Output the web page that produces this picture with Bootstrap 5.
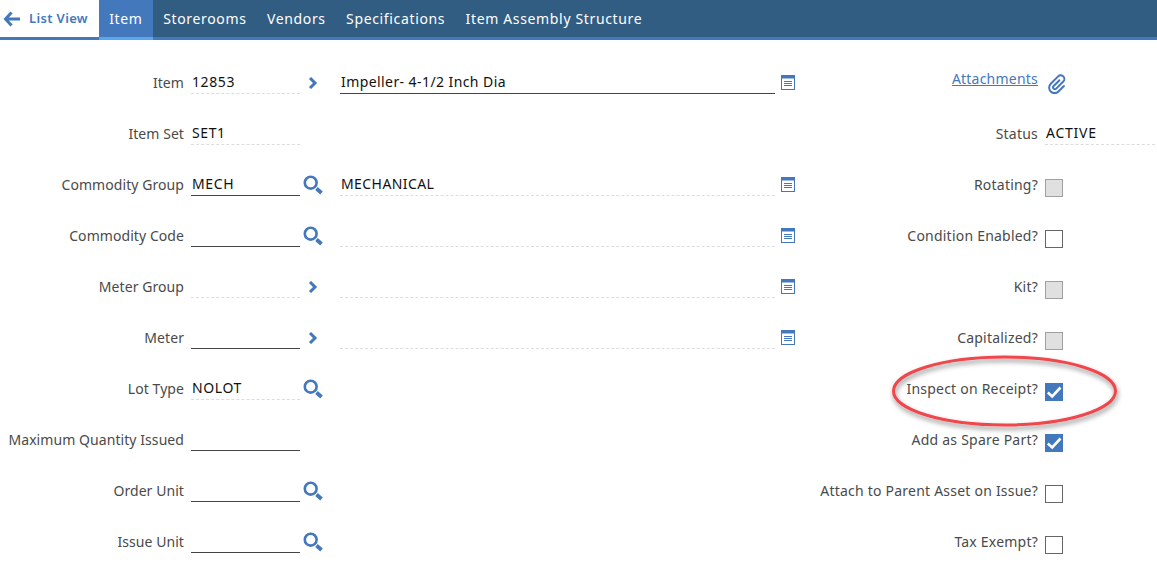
<!DOCTYPE html>
<html lang="en">
<head>
<meta charset="utf-8">
<title>Item</title>
<link rel="stylesheet" href="https://cdn.jsdelivr.net/npm/bootstrap@5.3.0/dist/css/bootstrap.min.css">
<style>
html,body{height:576px;overflow:hidden;background:#fff}
body{font-family:"Noto Sans","Liberation Sans",sans-serif;font-size:14px;color:#4a4a4a}
.tabbar{height:40px;background:#325d82;border-bottom:3px solid #4478bd}
.tab-back{width:99px;height:37px;background:#fff;color:#4478bd;font-weight:600;font-size:13px;letter-spacing:.35px;padding-left:3px;gap:9px;text-decoration:none}
.tab-link{height:37px;padding:0 10.2px;color:#fff;font-size:14px;text-decoration:none;letter-spacing:.65px}
.tab-on{background:#4478bd;width:54px;height:40px;box-shadow:inset 0 -3px 0 #5aa5f0;padding-bottom:3px}
.form-area{padding-top:17px;position:relative}
.frow{height:51px}
.flabel{width:184px;text-align:right;letter-spacing:.07px}
.fval{width:109px;margin-left:7px;height:22px;padding-left:1px;line-height:20px;color:#111;letter-spacing:.6px;border-bottom:1px dashed #ddd}
.fval.edit{border-bottom:1px solid #444}
.ic-slot{width:40px;padding-left:3px;flex:none}
.ic-chev{margin-left:5px}
.fdesc{width:435px;height:22px;line-height:20px;padding-left:1px;color:#111;letter-spacing:.42px;border-bottom:1px dashed #ddd}
.fdesc.edit{border-bottom:1px solid #444}
.ic-doc{margin-left:6px;width:14px}
.rlabel{width:243px;text-align:right;flex:none;letter-spacing:.22px}
.mid{width:455px;flex:none}
.rlabel a{color:#4478bd}
.rlabel.lift{padding-bottom:8px}
.rval{width:110px;margin-left:7px;height:22px;line-height:20px;padding-left:1px;color:#111;letter-spacing:.75px;border-bottom:1px dashed #ddd}
.cbx{width:18px;height:18px;margin:6px 0 0 7px;border:1px solid #666;background:#fff;flex:none}
.cbx.off{background:#e0e0e0;border-color:#a0a0a0}
.cbx.on{background:#4478bd;border-color:#4478bd}
.cbx svg{display:block}
.clip{margin-left:10px;margin-top:2px}
.ring{position:absolute;left:892px;top:356px;width:226px;height:72px;pointer-events:none;overflow:visible}
</style>
</head>
<body>
<svg width="0" height="0" class="position-absolute">
<defs>
<symbol id="i-chev" viewBox="0 0 10 12"><path d="M2 1 7 6 2 11" fill="none" stroke="#4478bd" stroke-width="3"/></symbol>
<symbol id="i-mag" viewBox="0 0 20 20"><circle cx="7.7" cy="7.7" r="5.900" fill="none" stroke="#4478bd" stroke-width="2.600"/><path d="M13.500 13.500 18.500 18" stroke="#4478bd" stroke-width="3.800"/></symbol>
<symbol id="i-doc" viewBox="0 0 14 15"><rect x=".5" y=".5" width="13" height="14" fill="#fff" stroke="#4478bd"/><rect x="0" y="0" width="14" height="3.5" fill="#4478bd"/><path d="M3 6.5h8M3 8.5h8M3 10.5h8" stroke="#4478bd"/></symbol>
<symbol id="i-check" viewBox="0 0 16 16"><path d="M1.800 8.500 6.200 12.500 14.500 3.500" fill="none" stroke="#fff" stroke-width="2.600"/></symbol>
</defs>
</svg>

<nav class="tabbar d-flex align-items-start">
  <a class="tab-back d-flex align-items-center" href="#"><svg width="17" height="16" viewBox="0 0 17 16"><path d="M8.500 1.500 2.500 8l6 6.500M3 8H17" fill="none" stroke="#4478bd" stroke-width="3"/></svg>List View</a>
  <a class="tab-link tab-on d-flex align-items-center" href="#">Item</a>
  <a class="tab-link d-flex align-items-center" href="#">Storerooms</a>
  <a class="tab-link d-flex align-items-center" href="#">Vendors</a>
  <a class="tab-link d-flex align-items-center" href="#">Specifications</a>
  <a class="tab-link d-flex align-items-center" href="#">Item Assembly Structure</a>
</nav>

<main class="form-area">
  <div class="frow d-flex align-items-center">
    <div class="flabel">Item</div><div class="fval">12853</div>
    <div class="ic-slot d-flex"><svg class="ic-chev" width="10" height="12"><use href="#i-chev"/></svg></div>
    <div class="fdesc edit">Impeller- 4-1/2 Inch Dia</div><svg class="ic-doc" width="14" height="15"><use href="#i-doc"/></svg>
    <div class="rlabel lift"><a href="#">Attachments</a></div>
    <svg class="clip" width="20" height="20" viewBox="-11 -11 22 22"><g transform="rotate(45)"><path d="M-1.800 -4V5a2 2 0 0 0 4 0V-6a4 4 0 0 0-8 0V5.500a6 6 0 0 0 12 0V-3" fill="none" stroke="#4478bd" stroke-width="2.200" stroke-linecap="round"/></g></svg>
  </div>
  <div class="frow d-flex align-items-center">
    <div class="flabel">Item Set</div><div class="fval">SET1</div>
    <div class="ic-slot"></div><div class="mid"></div>
    <div class="rlabel">Status</div><div class="rval">ACTIVE</div>
  </div>
  <div class="frow d-flex align-items-center">
    <div class="flabel">Commodity Group</div><div class="fval edit">MECH</div>
    <div class="ic-slot d-flex"><svg width="20" height="20"><use href="#i-mag"/></svg></div>
    <div class="fdesc">MECHANICAL</div><svg class="ic-doc" width="14" height="15"><use href="#i-doc"/></svg>
    <div class="rlabel">Rotating?</div><div class="cbx off"></div>
  </div>
  <div class="frow d-flex align-items-center">
    <div class="flabel">Commodity Code</div><div class="fval edit"></div>
    <div class="ic-slot d-flex"><svg width="20" height="20"><use href="#i-mag"/></svg></div>
    <div class="fdesc"></div><svg class="ic-doc" width="14" height="15"><use href="#i-doc"/></svg>
    <div class="rlabel">Condition Enabled?</div><div class="cbx"></div>
  </div>
  <div class="frow d-flex align-items-center">
    <div class="flabel">Meter Group</div><div class="fval"></div>
    <div class="ic-slot d-flex"><svg class="ic-chev" width="10" height="12"><use href="#i-chev"/></svg></div>
    <div class="fdesc"></div><svg class="ic-doc" width="14" height="15"><use href="#i-doc"/></svg>
    <div class="rlabel">Kit?</div><div class="cbx off"></div>
  </div>
  <div class="frow d-flex align-items-center">
    <div class="flabel">Meter</div><div class="fval edit"></div>
    <div class="ic-slot d-flex"><svg class="ic-chev" width="10" height="12"><use href="#i-chev"/></svg></div>
    <div class="fdesc"></div><svg class="ic-doc" width="14" height="15"><use href="#i-doc"/></svg>
    <div class="rlabel">Capitalized?</div><div class="cbx off"></div>
  </div>
  <div class="frow d-flex align-items-center">
    <div class="flabel">Lot Type</div><div class="fval">NOLOT</div>
    <div class="ic-slot d-flex"><svg width="20" height="20"><use href="#i-mag"/></svg></div>
    <div class="mid"></div>
    <div class="rlabel">Inspect on Receipt?</div><div class="cbx on"><svg width="16" height="16"><use href="#i-check"/></svg></div>
  </div>
  <div class="frow d-flex align-items-center">
    <div class="flabel">Maximum Quantity Issued</div><div class="fval edit"></div>
    <div class="ic-slot"></div><div class="mid"></div>
    <div class="rlabel">Add as Spare Part?</div><div class="cbx on"><svg width="16" height="16"><use href="#i-check"/></svg></div>
  </div>
  <div class="frow d-flex align-items-center">
    <div class="flabel">Order Unit</div><div class="fval edit"></div>
    <div class="ic-slot d-flex"><svg width="20" height="20"><use href="#i-mag"/></svg></div>
    <div class="mid"></div>
    <div class="rlabel">Attach to Parent Asset on Issue?</div><div class="cbx"></div>
  </div>
  <div class="frow d-flex align-items-center">
    <div class="flabel">Issue Unit</div><div class="fval edit"></div>
    <div class="ic-slot d-flex"><svg width="20" height="20"><use href="#i-mag"/></svg></div>
    <div class="mid"></div>
    <div class="rlabel">Tax Exempt?</div><div class="cbx"></div>
  </div>
</main>
<svg class="ring" viewBox="0 0 226 72"><defs><filter id="sh" x="-10%" y="-20%" width="120%" height="150%"><feDropShadow dx="1" dy="3" stdDeviation="2.500" flood-color="#000" flood-opacity=".45"/></filter></defs><ellipse cx="112.500" cy="35" rx="111" ry="34" fill="none" stroke="#f0474d" stroke-width="3" filter="url(#sh)"/></svg>
<script src="https://cdn.jsdelivr.net/npm/bootstrap@5.3.0/dist/js/bootstrap.bundle.min.js"></script>
</body>
</html>
